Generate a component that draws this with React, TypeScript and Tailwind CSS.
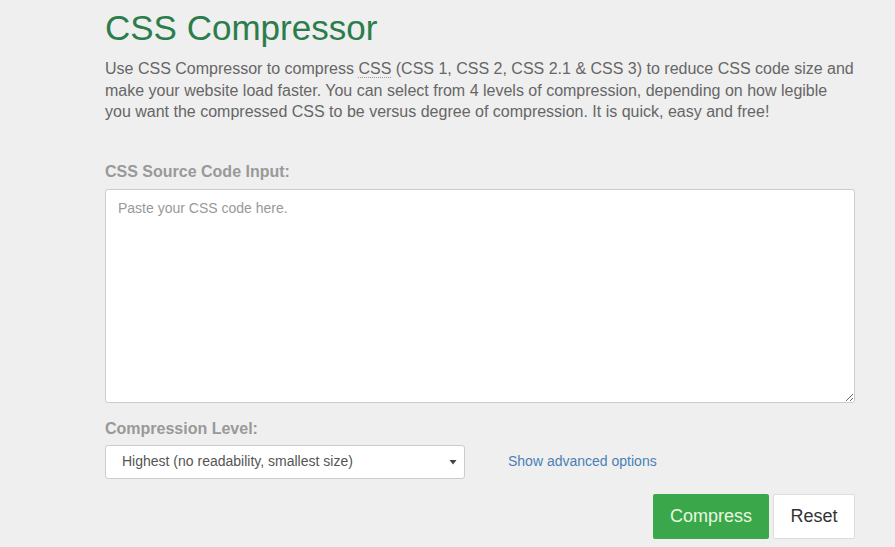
export default function App() {
  return (
    <div className="min-h-[547px] w-full overflow-hidden bg-[#efefef] font-['Liberation_Sans',Arial,sans-serif]">
      <div className="ml-[105px] w-[750px]">
        <h1 className="pt-[6px] text-[35px] leading-[44px] text-[#2b7d4b]">CSS Compressor</h1>
        <p className="mt-[8px] text-[16px] leading-[21.5px] text-[#666]">
          Use CSS Compressor to compress <span className="border-b border-dotted border-[#999]">CSS</span> (CSS 1,
          CSS 2, CSS 2.1 &amp; CSS 3) to reduce CSS code size and make your website load faster. You can select from
          4 levels of compression, depending on how legible you want the compressed CSS to be versus degree of
          compression. It is quick, easy and free!
        </p>

        <label className="mt-[39px] block text-[16px] font-bold leading-[20px] text-[#999]">CSS Source Code Input:</label>
        <textarea
          className="mt-[7px] block h-[214px] w-[750px] resize-y rounded-[3px] border border-[#ccc] bg-white px-[12px] py-[8px] text-[14px] text-[#555] placeholder:text-[#999] outline-none"
          placeholder="Paste your CSS code here."
        />

        <label className="mt-[16px] block text-[16px] font-bold leading-[20px] text-[#999]">Compression Level:</label>
        <div className="mt-[6px] flex items-center">
          <div className="flex h-[34px] w-[360px] items-center justify-between rounded-[3px] border border-[#ccc] bg-white pl-[16px] pr-[6px] text-[14px] text-[#555]">
            <span>Highest (no readability, smallest size)</span>
            <svg width="8" height="6" viewBox="0 0 8 6" className="mr-[1px]">
              <path d="M0.5 1 L7.5 1 L4 5.5 Z" fill="#444" />
            </svg>
          </div>
          <a href="#" className="ml-[43px] text-[14px] text-[#4a7fb5]">
            Show advanced options
          </a>
        </div>

        <div className="mt-[15px] flex justify-end gap-[4px]">
          <button className="h-[45px] w-[116px] rounded-[2px] bg-[#3aa84a] text-[18px] text-[#e8f7e0]">Compress</button>
          <button className="h-[45px] w-[82px] rounded-[2px] border border-[#ddd] bg-white text-[18px] text-[#333]">
            Reset
          </button>
        </div>
      </div>
    </div>
  );
}
